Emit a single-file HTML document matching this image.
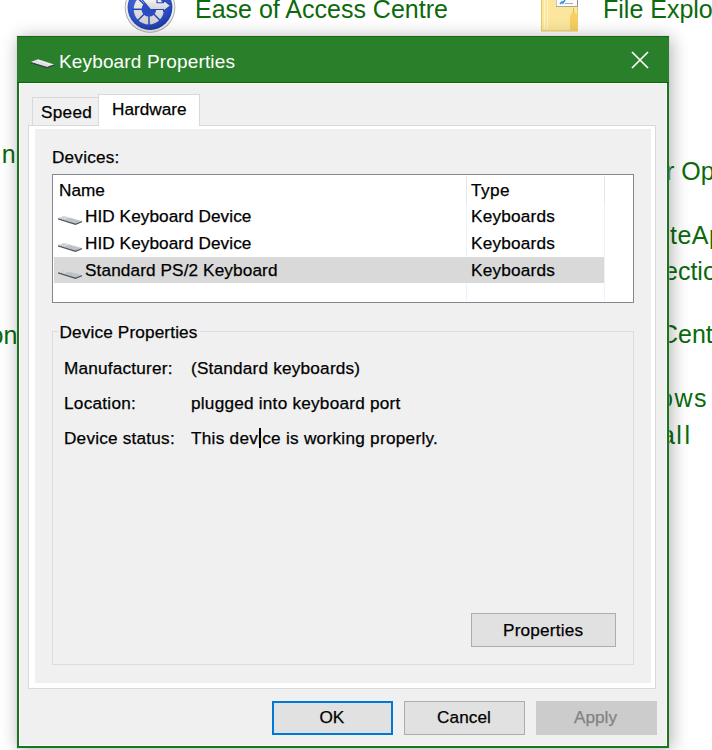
<!DOCTYPE html>
<html><head><meta charset="utf-8">
<style>
*{box-sizing:border-box;margin:0;padding:0}
html,body{width:712px;height:750px;overflow:hidden;background:#fff}
body{position:relative;font-family:"Liberation Sans",sans-serif;color:#000}
.a{position:absolute;white-space:nowrap;line-height:1}
.bg{font-size:25px;color:#0b6a0b}
.t{font-size:17.2px;transform:translate(-1px,1px);-webkit-text-stroke:0.25px #000}
</style></head><body>
<!-- background control panel -->
<!-- ease of access icon -->
<svg class="a" style="left:120px;top:0" width="60" height="38" viewBox="120 0 60 38">
<defs>
<radialGradient id="bl" cx="0.4" cy="0.3" r="0.75"><stop offset="0" stop-color="#4c70dc"/><stop offset="0.7" stop-color="#2f50c4"/><stop offset="1" stop-color="#1a36a0"/></radialGradient>
<linearGradient id="rim" x1="0" y1="0" x2="0" y2="1"><stop offset="0" stop-color="#ffffff"/><stop offset="1" stop-color="#e4e4e4"/></linearGradient>
<linearGradient id="wh" x1="0" y1="0" x2="0" y2="1"><stop offset="0" stop-color="#f4f4f4"/><stop offset="1" stop-color="#cfcfcf"/></linearGradient>
</defs>
<circle cx="150" cy="7.5" r="25.3" fill="#a9a9a9"/>
<circle cx="150" cy="7.5" r="24.4" fill="url(#rim)"/>
<circle cx="150" cy="7.5" r="22.4" fill="url(#bl)"/>
<circle cx="148.8" cy="9.3" r="15.1" fill="url(#wh)"/>
<g stroke="#2446b8" stroke-width="1.5">
<line x1="149" y1="9.3" x2="149" y2="26"/>
<line x1="149" y1="9.3" x2="132" y2="9.3"/>
<line x1="149" y1="9.3" x2="137" y2="21.3"/>
<line x1="149" y1="9.3" x2="161" y2="21.3"/>
<line x1="149" y1="9.3" x2="137" y2="-2.7"/>
</g>
<circle cx="148.9" cy="9.2" r="7.4" fill="#2b4cc0"/>
<path d="M141.5,-1 L157,-1 L157,2.7 L163.5,2.7 L163.5,0 L170.5,5.6 L163.5,11.2 L163.5,9.5 L150.5,9.5 Z" fill="url(#wh)" stroke="#2446b8" stroke-width="1.1"/>
</svg>
<!-- folder icon -->
<svg class="a" style="left:538px;top:0" width="44" height="36" viewBox="538 0 44 36">
<rect x="541" y="-4" width="37" height="35.5" fill="#f0c75a"/>
<rect x="542" y="-4" width="35" height="34.5" fill="#fce59c"/>
<rect x="544" y="-4" width="1" height="33" fill="#fff3c8"/>
<rect x="547" y="-4" width="1" height="33" fill="#fff3c8"/>
<rect x="556" y="-4" width="22" height="10.7" fill="#8a8f96"/>
<rect x="556.5" y="-4" width="20.5" height="10" fill="#fbfbfb"/>
<path d="M560 4 l2 -2 l1 1 l2 -3" stroke="#3a8ee8" stroke-width="1.6" fill="none"/>
<rect x="565" y="3" width="8" height="0.8" fill="#999"/>
<path d="M573 10 C 573 13 570 14 570 18 L570 31 L578 31 L578 18 C578 14 574 13 574 10 Z" fill="#f5cf62"/>
<path d="M573.5 8 L573.5 12" stroke="#e6b84a" stroke-width="1"/>
</svg>

<div class="a bg" style="left:195px;top:-3.2px">Ease of Access Centre</div>
<div class="a bg" style="left:603px;top:-3.3px">File Explorer</div>
<div class="a bg" style="left:666px;top:159.4px">r Options</div>
<div class="a bg" style="left:670px;top:222.8px;letter-spacing:0.5px">teApp</div>
<div class="a bg" style="left:664px;top:259.2px">ections</div>
<div class="a bg" style="left:660px;top:322.1px">Centre</div>
<div class="a bg" style="left:659px;top:385.8px;letter-spacing:1.5px">ows</div>
<div class="a bg" style="left:661px;top:423px">a</div>
<div class="a bg" style="left:676.3px;top:423px;letter-spacing:2.6px">ll</div>
<div class="a bg" style="left:1.8px;top:141.8px">n</div>
<div class="a bg" style="left:-10.5px;top:322.8px">on</div>

<!-- shadow -->
<div class="a" style="left:17px;top:36px;width:652px;height:712px;box-shadow:2px 2px 17px rgba(0,0,0,0.32)"></div>
<div class="a" style="left:16px;top:35px;width:654px;height:714px;border:1px solid rgba(240,190,240,0.4)"></div>

<!-- dialog -->
<div class="a" style="left:17px;top:36px;width:652px;height:712px;background:#167816;border-top:1px solid #0b6e0b"></div>
<div class="a" style="left:17px;top:37px;width:652px;height:45px;background:#2a7f2a"></div>
<div class="a" style="left:17px;top:82px;width:652px;height:1px;background:#006b00"></div>
<div class="a" style="left:19px;top:83px;width:648px;height:663px;background:#fff"></div>
<div class="a" style="left:20px;top:84px;width:646px;height:661px;background:#f0f0f0"></div>

<!-- title icon -->
<svg class="a" style="left:0;top:0" width="90" height="90" viewBox="0 0 90 90">
<polygon points="30.5,62 38,59.3 54.3,64.6 47,67" fill="#ecebf2"/>
<polygon points="30.5,62 47,67 54.3,64.6 54.3,65.8 47,68.3 30.5,63.2" fill="#3c3a4c"/>
<path d="M35.5 61.2L50.5 65.8M33.5 62.2L48.5 66.7" stroke="#b4b4c0" stroke-width="0.6" stroke-dasharray="1.4 0.9"/>
</svg>
<!-- title -->
<div class="a" style="left:59px;top:51.8px;font-size:19px;color:#fff;letter-spacing:0.15px">Keyboard Properties</div>
<!-- close X -->
<svg class="a" style="left:630.3px;top:49.5px" width="20" height="20" viewBox="0 0 20 20"><path d="M2 2L18 18M18 2L2 18" stroke="#fff" stroke-width="1.75"/></svg>

<!-- tabs -->
<div class="a" style="left:28px;top:125px;width:628px;height:564px;background:#fff;border:1px solid #d9d9d9"></div>
<div class="a" style="left:35px;top:129px;width:616px;height:554px;background:#f0f0f0"></div>
<div class="a" style="left:32px;top:97px;width:67px;height:29px;background:#f0f0f0;border:1px solid #d9d9d9"></div>
<div class="a" style="left:98px;top:94px;width:102px;height:32px;background:#fff;border:1px solid #d9d9d9;border-bottom:none"></div>
<div class="a" style="left:99px;top:125px;width:100px;height:4px;background:#fff"></div>
<div class="a t" style="left:42px;top:103px;letter-spacing:0.3px">Speed</div>
<div class="a t" style="left:113px;top:99.8px">Hardware</div>

<div class="a t" style="left:53px;top:148px;letter-spacing:0.2px">Devices:</div>

<!-- listview -->
<div class="a" style="left:52px;top:174px;width:582px;height:129px;background:#fff;border:1px solid #828790"></div>
<div class="a" style="left:466px;top:176px;width:1px;height:27px;background:#e5e5e5"></div>
<div class="a" style="left:466px;top:203px;width:1px;height:98px;background:#eaf2fb"></div>
<div class="a" style="left:604px;top:176px;width:1px;height:27px;background:#e5e5e5"></div>
<div class="a" style="left:604px;top:203px;width:1px;height:98px;background:#eaf2fb"></div>
<div class="a" style="left:54px;top:257px;width:550px;height:26px;background:#d9d9d9"></div>
<svg class="a" style="left:0;top:0" width="90" height="290" viewBox="0 0 90 290">
<g>
<polygon points="58,218.3 64,215.9 82,220.9 75.5,223.5" fill="#c4c8ce"/>
<polygon points="58.5,218 64,215.9 70,217.5 64.5,219.8" fill="#dcdfe3"/>
<polygon points="58,218.3 75.5,223.5 82,220.9 82,222.2 75.5,225 58,219.6" fill="#50545c"/>
<path d="M62.5 217.3L78.5 221.6M60.8 218.3L76.5 222.7" stroke="#a9adb4" stroke-width="0.6" stroke-dasharray="1.3 0.8"/>
</g>
<g transform="translate(0,27)">
<polygon points="58,218.3 64,215.9 82,220.9 75.5,223.5" fill="#c4c8ce"/>
<polygon points="58.5,218 64,215.9 70,217.5 64.5,219.8" fill="#dcdfe3"/>
<polygon points="58,218.3 75.5,223.5 82,220.9 82,222.2 75.5,225 58,219.6" fill="#50545c"/>
<path d="M62.5 217.3L78.5 221.6M60.8 218.3L76.5 222.7" stroke="#a9adb4" stroke-width="0.6" stroke-dasharray="1.3 0.8"/>
</g>
<g transform="translate(0,54)">
<polygon points="58,218.3 64,215.9 82,220.9 75.5,223.5" fill="#c4c8ce"/>
<polygon points="58.5,218 64,215.9 70,217.5 64.5,219.8" fill="#dcdfe3"/>
<polygon points="58,218.3 75.5,223.5 82,220.9 82,222.2 75.5,225 58,219.6" fill="#50545c"/>
<path d="M62.5 217.3L78.5 221.6M60.8 218.3L76.5 222.7" stroke="#a9adb4" stroke-width="0.6" stroke-dasharray="1.3 0.8"/>
</g>
</svg>
<div class="a t" style="left:60px;top:180.8px">Name</div>
<div class="a t" style="left:472px;top:180.8px;letter-spacing:0.45px">Type</div>
<div class="a t" style="left:86px;top:207px;letter-spacing:0.06px">HID Keyboard Device</div>
<div class="a t" style="left:472px;top:207px;letter-spacing:0.2px">Keyboards</div>
<div class="a t" style="left:86px;top:234.3px;letter-spacing:0.06px">HID Keyboard Device</div>
<div class="a t" style="left:472px;top:234.3px;letter-spacing:0.2px">Keyboards</div>
<div class="a t" style="left:86px;top:261.1px;letter-spacing:0.11px">Standard PS/2 Keyboard</div>
<div class="a t" style="left:472px;top:261.1px;letter-spacing:0.2px">Keyboards</div>

<!-- group box -->
<div class="a" style="left:52px;top:331px;width:582px;height:334px;border:1px solid #dcdcdc"></div>
<div class="a" style="left:58px;top:325px;width:142px;height:14px;background:#f0f0f0"></div>
<div class="a t" style="left:60.5px;top:323.1px;letter-spacing:0.14px">Device Properties</div>
<div class="a t" style="left:65px;top:358.6px;letter-spacing:0.2px">Manufacturer:</div>
<div class="a t" style="left:192px;top:358.6px;letter-spacing:0.2px">(Standard keyboards)</div>
<div class="a t" style="left:65px;top:394px;letter-spacing:0.26px">Location:</div>
<div class="a t" style="left:192px;top:394px;letter-spacing:0.23px">plugged into keyboard port</div>
<div class="a t" style="left:65px;top:429.4px;letter-spacing:0.21px">Device status:</div>
<div class="a t" style="left:192px;top:429.4px;letter-spacing:0.27px">This device is working properly.</div>

<div class="a" style="left:258.7px;top:428px;width:2px;height:20px;background:#000"></div>
<!-- buttons -->
<div class="a" style="left:471px;top:613px;width:145px;height:34px;background:#e1e1e1;border:1px solid #adadad"></div>
<div class="a t" style="left:504px;top:621.2px;letter-spacing:0.19px">Properties</div>

<div class="a" style="left:272px;top:701px;width:121px;height:34px;background:#e1e1e1;border:2px solid #0078d7"></div>
<div class="a t" style="left:320.5px;top:708.4px">OK</div>
<div class="a" style="left:404px;top:701px;width:121px;height:34px;background:#e1e1e1;border:1px solid #adadad"></div>
<div class="a t" style="left:438px;top:708.4px;letter-spacing:0.08px">Cancel</div>
<div class="a" style="left:536px;top:701px;width:121px;height:34px;background:#cccccc"></div>
<div class="a t" style="left:575px;top:708.4px;color:#838383;-webkit-text-stroke:0.25px #838383">Apply</div>

</body></html>
